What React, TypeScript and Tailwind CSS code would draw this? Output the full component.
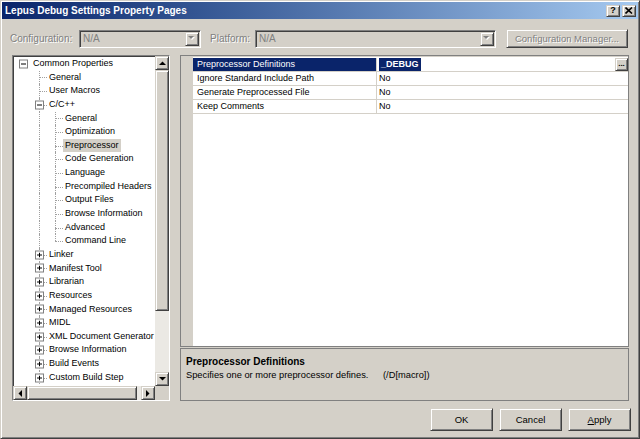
import React from 'react'

const font = { fontFamily: '"Liberation Sans", Arial, sans-serif' }

const raised =
  'bg-[#d4d0c8] border border-t-[#d4d0c8] border-l-[#d4d0c8] border-r-[#404040] border-b-[#404040] shadow-[inset_1px_1px_0_#fff,inset_-1px_-1px_0_#808080]'
const sunken =
  'border border-t-[#808080] border-l-[#808080] border-r-white border-b-white shadow-[inset_1px_1px_0_#404040,inset_-1px_-1px_0_#d4d0c8]'
const disabledText = 'text-[#808080] [text-shadow:1px_1px_0_#fff]'

type Dir = 'up' | 'down' | 'left' | 'right'

function Arrow({ dir, color = '#000' }: { dir: Dir; color?: string }) {
  const pts: Record<Dir, string> = {
    up: '0,4 7,4 3.5,0.5',
    down: '0,0 7,0 3.5,3.5',
    left: '4,0 4,7 0.5,3.5',
    right: '0,0 0,7 3.5,3.5',
  }
  const vertical = dir === 'up' || dir === 'down'
  return (
    <svg width={vertical ? 7 : 4} height={vertical ? 4 : 7} viewBox={vertical ? '0 0 7 4' : '0 0 4 7'}>
      <polygon points={pts[dir]} fill={color} />
    </svg>
  )
}

function ScrollButton({ dir }: { dir: Dir }) {
  return (
    <div className={`${raised} w-[14px] h-[14px] flex items-center justify-center shrink-0`}>
      <Arrow dir={dir} />
    </div>
  )
}

function Combo({ width }: { width: string }) {
  return (
    <div className={`${sunken} ${width} h-[18px] bg-[#d4d0c8] flex items-center pl-[3px] pr-[1px]`}>
      <span className="flex-1 text-[10px] text-[#808080] leading-none">N/A</span>
      <div className={`${raised} w-[14px] h-[14px] flex items-center justify-center`}>
        <svg width="8" height="5" viewBox="0 0 8 5">
          <polygon points="1,1 7,1 4,4" fill="#fff" />
          <polygon points="0,0 6,0 3,3" fill="#808080" />
        </svg>
      </div>
    </div>
  )
}

type TreeItem = {
  label: string
  level: number
  box?: '+' | '-'
  last?: boolean
  selected?: boolean
}

const tree: TreeItem[] = [
  { label: 'Common Properties', level: 0, box: '-' },
  { label: 'General', level: 1 },
  { label: 'User Macros', level: 1 },
  { label: 'C/C++', level: 1, box: '-' },
  { label: 'General', level: 2 },
  { label: 'Optimization', level: 2 },
  { label: 'Preprocessor', level: 2, selected: true },
  { label: 'Code Generation', level: 2 },
  { label: 'Language', level: 2 },
  { label: 'Precompiled Headers', level: 2 },
  { label: 'Output Files', level: 2 },
  { label: 'Browse Information', level: 2 },
  { label: 'Advanced', level: 2 },
  { label: 'Command Line', level: 2, last: true },
  { label: 'Linker', level: 1, box: '+' },
  { label: 'Manifest Tool', level: 1, box: '+' },
  { label: 'Librarian', level: 1, box: '+' },
  { label: 'Resources', level: 1, box: '+' },
  { label: 'Managed Resources', level: 1, box: '+' },
  { label: 'MIDL', level: 1, box: '+' },
  { label: 'XML Document Generator', level: 1, box: '+' },
  { label: 'Browse Information', level: 1, box: '+' },
  { label: 'Build Events', level: 1, box: '+' },
  { label: 'Custom Build Step', level: 1, box: '+' },
]

function ExpandBox({ sign }: { sign: '+' | '-' }) {
  return (
    <div className="absolute left-[4px] top-1/2 -translate-y-1/2 w-[9px] h-[9px] border border-[#808080] bg-white flex items-center justify-center">
      <svg width="5" height="5" viewBox="0 0 5 5">
        <rect x="0" y="2" width="5" height="1" fill="#000" />
        {sign === '+' && <rect x="2" y="0" width="1" height="5" fill="#000" />}
      </svg>
    </div>
  )
}

function TreeRow({ item }: { item: TreeItem }) {
  const cells = []
  for (let i = 0; i <= item.level; i++) {
    const own = i === item.level
    // root column has no line; deeper columns carry the sibling line
    const showLine = i > 0
    const half = own && item.last
    cells.push(
      <div key={i} className="relative w-[16px] h-full shrink-0">
        {showLine && (
          <div
            className={`absolute left-[8px] top-0 border-l border-dotted border-[#a0a0a0] ${half ? 'h-1/2' : 'bottom-0'}`}
          />
        )}
        {own && i > 0 && (
          <div className="absolute left-[8px] right-0 top-1/2 border-t border-dotted border-[#a0a0a0]" />
        )}
        {own && item.box && <ExpandBox sign={item.box} />}
      </div>
    )
  }
  return (
    <div className="flex h-[13.65px] items-stretch">
      {cells}
      <span
        className={`px-[2px] text-[9px] leading-[13.65px] whitespace-nowrap text-black ${item.selected ? 'bg-[#d4d0c8]' : ''}`}
      >
        {item.label}
      </span>
    </div>
  )
}

const props = [
  { name: 'Preprocessor Definitions', value: '_DEBUG', selected: true },
  { name: 'Ignore Standard Include Path', value: 'No' },
  { name: 'Generate Preprocessed File', value: 'No' },
  { name: 'Keep Comments', value: 'No' },
]

export default function App() {
  return (
    <div
      style={font}
      className="w-[640px] h-[439px] bg-[#d4d0c8] p-[1px] border border-t-[#d4d0c8] border-l-[#d4d0c8] border-r-[#404040] border-b-[#404040] shadow-[inset_1px_1px_0_#fff,inset_-1px_-1px_0_#808080] overflow-hidden flex flex-col"
    >
      {/* Title bar */}
      <div className="h-[17px] shrink-0 bg-linear-to-r from-[#0a246a] to-[#a6caf0] flex items-center pl-[3px] pr-[2px]">
        <span className="flex-1 text-white font-bold text-[10px] leading-none">
          Lepus Debug Settings Property Pages
        </span>
        <div className="flex gap-[2px]">
          <div className={`${raised} w-[14px] h-[12px] flex items-center justify-center`}>
            <span className="text-[9px] font-bold leading-none text-black">?</span>
          </div>
          <div className={`${raised} w-[14px] h-[12px] flex items-center justify-center`}>
            <svg width="8" height="7" viewBox="0 0 8 7">
              <path d="M0.5 0.5 L7 6.5 M7 0.5 L0.5 6.5" stroke="#000" strokeWidth="1.6" />
            </svg>
          </div>
        </div>
      </div>

      {/* Configuration row */}
      <div className="mt-[10px] h-[19px] shrink-0 flex items-center pl-[8px]">
        <span className={`w-[69px] text-[10px] leading-none ${disabledText}`}>Configuration:</span>
        <Combo width="w-[122px]" />
        <span className={`ml-[9px] w-[45px] text-[10px] leading-none ${disabledText}`}>Platform:</span>
        <Combo width="w-[241px]" />
        <div className={`${raised} ml-[10px] w-[122px] h-[19px] flex items-center justify-center`}>
          <span className={`text-[9.5px] leading-none ${disabledText}`}>Configuration Manager...</span>
        </div>
      </div>

      {/* Main area */}
      <div className="mt-[7px] h-[346px] shrink-0 flex pl-[10px]">
        {/* Tree */}
        <div className={`${sunken} w-[158px] h-full flex flex-col bg-white`}>
          <div className="flex flex-1 min-h-0">
            <div className="flex-1 overflow-hidden pl-[2px] pt-[1px]">
              {tree.map((item, i) => (
                <TreeRow key={i} item={item} />
              ))}
            </div>
            <div className="w-[14px] flex flex-col bg-[#ebe9e4]">
              <ScrollButton dir="up" />
              <div className={`${raised} h-[241px] shrink-0`} />
              <div className="flex-1" />
              <ScrollButton dir="down" />
            </div>
          </div>
          <div className="h-[14px] flex shrink-0">
            <div className="flex-1 flex bg-[#ebe9e4]">
              <ScrollButton dir="left" />
              <div className={`${raised} w-[110px] h-[14px] shrink-0`} />
              <div className="flex-1" />
              <ScrollButton dir="right" />
            </div>
            <div className="w-[14px] bg-[#d4d0c8]" />
          </div>
        </div>

        {/* Property grid + description */}
        <div className="ml-[10px] w-[449px] h-full flex flex-col">
          <div className="h-[292px] border border-[#808080] flex">
            <div className="w-[12px] h-full bg-[#d4d0c8]" />
            <div className="flex-1 bg-white flex flex-col pt-[1px] border-t border-[#d4d0c8]">
              {props.map((p) => (
                <div key={p.name} className="h-[14px] flex border-b border-[#d4d0c8]">
                  <div
                    className={`w-[183px] pl-[4px] text-[9px] leading-[13px] whitespace-nowrap ${p.selected ? 'bg-[#0a246a] text-white' : 'text-black'}`}
                  >
                    {p.name}
                  </div>
                  <div className="w-px bg-[#d4d0c8]" />
                  <div className="flex-1 flex items-stretch pl-[2px]">
                    {p.selected ? (
                      <>
                        <div className="flex-1 flex items-stretch">
                          <span className="bg-[#0a246a] text-white font-bold text-[9px] leading-[13px] px-[2px] h-[13px]">
                            {p.value}
                          </span>
                        </div>
                        <div className={`${raised} w-[13px] h-[13px] flex items-end justify-center pb-[2px]`}>
                          <span className="text-[8px] leading-none font-bold text-black">...</span>
                        </div>
                      </>
                    ) : (
                      <span className="text-[9px] leading-[13px] text-black">{p.value}</span>
                    )}
                  </div>
                </div>
              ))}
            </div>
          </div>
          <div className="mt-[1px] h-[53px] border border-[#808080] bg-[#d4d0c8] pl-[5px] pt-[7px] flex flex-col gap-[1px]">
            <span className="text-[10px] font-bold leading-[12px] text-black">Preprocessor Definitions</span>
            <div className="flex text-[9.3px] leading-[12px] text-black">
              <span className="w-[197px]">Specifies one or more preprocessor defines.</span>
              <span>(/D[macro])</span>
            </div>
          </div>
        </div>
      </div>

      {/* Buttons */}
      <div className="mt-[7px] h-[23px] shrink-0 flex justify-end gap-[6px] pr-[7px]">
        {['OK', 'Cancel', 'Apply'].map((label) => (
          <div key={label} className={`${raised} w-[63px] h-[23px] flex items-center justify-center`}>
            <span className="text-[9.5px] leading-none text-black">
              {label === 'Apply' ? (
                <>
                  <span className="underline">A</span>pply
                </>
              ) : (
                label
              )}
            </span>
          </div>
        ))}
      </div>
    </div>
  )
}
